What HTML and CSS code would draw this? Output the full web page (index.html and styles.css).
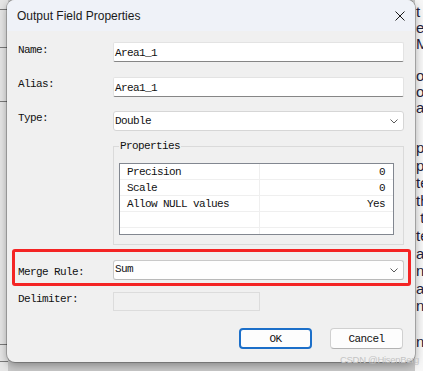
FILE: index.html
```html
<!DOCTYPE html>
<html>
<head>
<meta charset="utf-8">
<link rel="stylesheet" href="styles.css">
</head>
<body>
<div class="desk">
  <div class="bg-left">
    <div class="hl hl1"></div>
    <div class="hl hl2"></div>
    <div class="hl hl3"></div>
    <div class="hl hl4"></div>
    <div class="hl hl5"></div>
  </div>
  <div class="bg-mid"></div>
  <div class="bg-right">
    <div class="para p1">
      <div>t <span class="orange">a</span></div>
      <div>el</div>
      <div>Mu</div>
      <div>&nbsp;</div>
      <div>o s</div>
      <div>ou</div>
      <div>ate</div>
    </div>
    <div class="para p2">
      <div>pr</div>
      <div>pu</div>
      <div>te</div>
      <div>th</div>
      <div>&nbsp;t</div>
      <div>te</div>
      <div>a</div>
      <div>ni</div>
      <div>ax</div>
      <div>n-</div>
      <div>&nbsp;</div>
      <div>nu</div>
    </div>
  </div>

  <div class="dialog">
    <div class="titlebar">
      <span class="title">Output Field Properties</span>
      <svg class="close" width="10" height="10" viewBox="0 0 10 10"><path d="M0.5 0.5 L9.5 9.5 M9.5 0.5 L0.5 9.5" stroke="#1a1a1a" stroke-width="1" fill="none"/></svg>
    </div>
    <div class="body">
      <div class="row">
        <div class="lbl lbl-name">Name:</div>
        <div class="ctl textbox">Area1_1</div>
      </div>
      <div class="row row-alias">
        <div class="lbl">Alias:</div>
        <div class="ctl textbox">Area1_1</div>
      </div>
      <div class="row row-type">
        <div class="lbl">Type:</div>
        <div class="ctl combo"><span>Double</span><svg width="8" height="5" viewBox="0 0 8 5"><polyline points="0.5,0.5 4,4 7.5,0.5" fill="none" stroke="#5a5a5a" stroke-width="1"/></svg></div>
      </div>
      <fieldset class="group">
        <legend>Properties</legend>
        <div class="list">
          <div class="lrow"><div class="c1">Precision</div><div class="c2">0</div></div>
          <div class="lrow"><div class="c1">Scale</div><div class="c2">0</div></div>
          <div class="lrow"><div class="c1">Allow NULL values</div><div class="c2">Yes</div></div>
          <div class="lrow"><div class="c1"></div><div class="c2"></div></div>
          <div class="lrow"><div class="c1"></div><div class="c2"></div></div>
        </div>
      </fieldset>
      <div class="row row-merge">
        <div class="lbl lbl-merge">Merge Rule:</div>
        <div class="ctl combo combo-merge"><span>Sum</span><svg width="8" height="5" viewBox="0 0 8 5"><polyline points="0.5,0.5 4,4 7.5,0.5" fill="none" stroke="#5a5a5a" stroke-width="1"/></svg></div>
      </div>
      <div class="row row-delim">
        <div class="lbl">Delimiter:</div>
        <div class="disabled-box"></div>
      </div>
      <div class="buttons">
        <div class="btn btn-ok">OK</div>
        <div class="btn btn-cancel">Cancel</div>
      </div>
    </div>
  </div>

  <div class="highlight"></div>
  <div class="watermark">CSDN @HisenBerg</div>
</div>
</body>
</html>
```

FILE: styles.css
```css
* { box-sizing: border-box; }
html, body { margin: 0; padding: 0; }
body { width: 423px; height: 371px; overflow: hidden; background: #d4d4d4; }

.desk {
  position: relative;
  display: flex;
  width: 423px;
  height: 371px;
  overflow: hidden;
}

.bg-left {
  flex: 0 0 8px;
  background: #e6e6e6;
  display: flex;
  flex-direction: column;
}
.hl { height: 1px; background: #7a7a7a; }
.hl1 { margin-top: 9px; }
.hl2 { margin-top: 37px; }
.hl3 { margin-top: 53px; }
.hl4 { margin-top: 242px; }
.hl5 { margin-top: 16px; }

.bg-mid { flex: 1; background: #c9c9c9; }

.bg-right {
  flex: 0 0 8px;
  background: #f7f7f7;
  overflow: hidden;
  white-space: nowrap;
  padding-left: 1px;
  font-family: "Liberation Sans", Arial, sans-serif;
  font-size: 15px;
  color: #1d2340;
}
.p1 { padding-top: 4px; line-height: 16px; }
.p2 { margin-top: 23px; line-height: 17.6px; }
.orange { color: #e08a1e; }

.dialog {
  position: absolute;
  left: 7px;
  top: 0;
  width: 408px;
  height: 362px;
  background: #f0f0f0;
  border-radius: 8px;
  box-shadow: 0 0 0 1px rgba(0,0,0,0.22), 0 3px 10px rgba(0,0,0,0.35);
  overflow: hidden;
}

.titlebar {
  height: 31px;
  background: #eff2f8;
  display: flex;
  align-items: center;
  justify-content: space-between;
  padding: 0 10px 0 10px;
}
.title {
  font-family: "Liberation Sans", Arial, sans-serif;
  font-size: 12px;
  color: #1a1a1a;
  margin-top: 1px;
}
.close { display: block; }

.body {
  padding: 11px 11px 0 11px;
  font-family: "Liberation Mono", "Courier New", monospace;
  font-size: 11px;
  letter-spacing: -0.6px;
  color: #111;
}

.row { display: flex; }
.row-alias { margin-top: 15px; }
.row-type { margin-top: 14px; }
.row-merge { margin-top: 15px; }
.row-delim { margin-top: 12px; }

.lbl {
  flex: 0 0 95px;
  line-height: 14px;
  padding-top: 0;
}
.lbl-name { padding-top: 1px; }
.lbl-merge { padding-top: 5px; }

.ctl { flex: 0 0 291px; height: 20px; line-height: 20px; }

.textbox {
  background: #fff;
  border: 1px solid #e3e3e3;
  border-bottom-color: #868686;
  border-radius: 2px;
  padding-left: 1px;
  line-height: 19px;
  padding-top: 1px;
}

.combo {
  background: #fff;
  border: 1px solid #d6d6d6;
  border-radius: 3px;
  display: flex;
  align-items: center;
  justify-content: space-between;
  padding: 0 5px 0 1px;
}
.combo span { line-height: 18px; }
.combo svg { display: block; }
.combo-merge {
  border-color: #c9c9c9;
  border-bottom-color: #b9b9b9;
  background: #fefefe;
}
.combo-merge span { margin-top: -2px; }

.group {
  margin: 9px 0 0 95px;
  width: 291px;
  padding: 11px 9px 9px 5px;
  border: 1px solid #dadada;
  min-inline-size: 0;
}
.group legend {
  padding: 0 1px;
  margin-left: 0;
  line-height: 12px;
}

.list {
  height: 72px;
  border: 1px solid #828790;
  background: #fff;
  overflow: hidden;
}
.lrow {
  display: flex;
  height: 16px;
  border-bottom: 1px solid #efefef;
  line-height: 16px;
}
.c1 {
  flex: 0 0 140px;
  padding-left: 7px;
  border-right: 1px solid #efefef;
}
.c2 {
  flex: 1;
  text-align: right;
  padding-right: 8px;
}

.disabled-box {
  width: 147px;
  height: 19px;
  border: 1px solid #dcdcdc;
  background: #f0f0f0;
}

.buttons {
  display: flex;
  justify-content: flex-end;
  gap: 18px;
  margin-top: 17px;
  margin-right: 1px;
}
.btn {
  width: 73px;
  height: 21px;
  border-radius: 4px;
  display: flex;
  align-items: center;
  justify-content: center;
  background: #fdfdfd;
}
.btn-ok { border: 2px solid #1c6fc9; }
.btn-cancel { border: 1px solid #d0d0d0; border-bottom-color: #b3b3b3; }

.highlight {
  position: absolute;
  left: 12px;
  top: 249px;
  width: 399px;
  height: 37px;
  border: 3px solid #f42424;
  border-radius: 3px;
}

.watermark {
  position: absolute;
  left: 340px;
  top: 354px;
  font-family: "Liberation Sans", Arial, sans-serif;
  font-size: 9.5px;
  letter-spacing: -0.3px;
  color: #c4c4c4;
  white-space: nowrap;
}
```
